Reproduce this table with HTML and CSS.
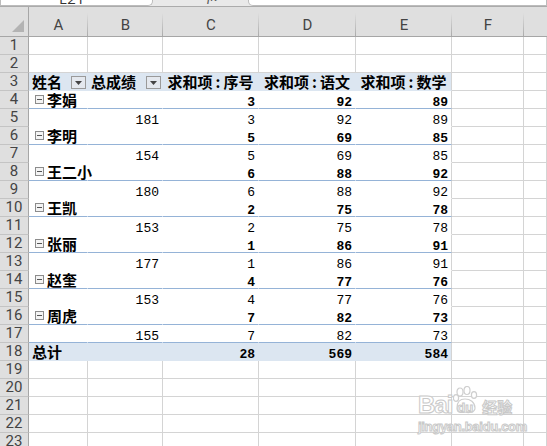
FILE: index.html
```
<!DOCTYPE html>
<html lang="zh-CN">
<head>
<meta charset="utf-8">
<title>数据透视表</title>
<link rel="stylesheet" href="styles.css">
</head>
<body>
<div class="topbar">
  <div class="namebox"><span>E21</span></div>
  <div class="fxgap"><span>fx</span></div>
  <div class="formula"></div>
</div>
<div class="sheet">
  <div class="row colhead">
    <div class="corner"><svg width="12" height="12" viewBox="0 0 12 12"><polygon points="12,0 12,12 0,12" fill="#b3b3b3"/></svg></div>
    <div class="ch">A</div><div class="ch">B</div><div class="ch">C</div><div class="ch">D</div><div class="ch">E</div><div class="ch">F</div><div class="ch last"></div>
  </div>

  <div class="row"><div class="rh">1</div><div></div><div></div><div></div><div></div><div></div><div></div><div></div></div>
  <div class="row"><div class="rh">2</div><div></div><div></div><div></div><div></div><div></div><div></div><div></div></div>

  <div class="row"><div class="rh">3</div>
    <div class="pv band hd fieldcell"><span>姓名</span><span class="dd"><svg width="7" height="4" viewBox="0 0 7 4"><polygon points="0,0 7,0 3.5,4" fill="#444"/></svg></span></div>
    <div class="pv band hd fieldcell"><span>总成绩</span><span class="dd"><svg width="7" height="4" viewBox="0 0 7 4"><polygon points="0,0 7,0 3.5,4" fill="#444"/></svg></span></div>
    <div class="pv band hd vh">求和项<span class="colon">:</span>序号</div>
    <div class="pv band hd vh">求和项<span class="colon">:</span>语文</div>
    <div class="pv band hd vh pe">求和项<span class="colon">:</span>数学</div>
    <div></div><div></div></div>

  <div class="row"><div class="rh">4</div><div class="pv sep name"><svg class="tg" width="9" height="9" viewBox="0 0 9 9"><rect x="0.5" y="0.5" width="8" height="8" fill="#f4f4f4" stroke="#8c8c8c"/><rect x="2" y="4" width="5" height="1" fill="#555"/></svg>李娟</div><div class="pv sep"></div><div class="pv sep num b">3</div><div class="pv sep num b">92</div><div class="pv sep pe num b">89</div><div></div><div></div></div>
  <div class="row"><div class="rh">5</div><div class="pv"></div><div class="pv num">181</div><div class="pv num">3</div><div class="pv num">92</div><div class="pv pe num">89</div><div></div><div></div></div>

  <div class="row"><div class="rh">6</div><div class="pv sep name"><svg class="tg" width="9" height="9" viewBox="0 0 9 9"><rect x="0.5" y="0.5" width="8" height="8" fill="#f4f4f4" stroke="#8c8c8c"/><rect x="2" y="4" width="5" height="1" fill="#555"/></svg>李明</div><div class="pv sep"></div><div class="pv sep num b">5</div><div class="pv sep num b">69</div><div class="pv sep pe num b">85</div><div></div><div></div></div>
  <div class="row"><div class="rh">7</div><div class="pv"></div><div class="pv num">154</div><div class="pv num">5</div><div class="pv num">69</div><div class="pv pe num">85</div><div></div><div></div></div>

  <div class="row"><div class="rh">8</div><div class="pv sep name"><svg class="tg" width="9" height="9" viewBox="0 0 9 9"><rect x="0.5" y="0.5" width="8" height="8" fill="#f4f4f4" stroke="#8c8c8c"/><rect x="2" y="4" width="5" height="1" fill="#555"/></svg>王二小</div><div class="pv sep"></div><div class="pv sep num b">6</div><div class="pv sep num b">88</div><div class="pv sep pe num b">92</div><div></div><div></div></div>
  <div class="row"><div class="rh">9</div><div class="pv"></div><div class="pv num">180</div><div class="pv num">6</div><div class="pv num">88</div><div class="pv pe num">92</div><div></div><div></div></div>

  <div class="row"><div class="rh">10</div><div class="pv sep name"><svg class="tg" width="9" height="9" viewBox="0 0 9 9"><rect x="0.5" y="0.5" width="8" height="8" fill="#f4f4f4" stroke="#8c8c8c"/><rect x="2" y="4" width="5" height="1" fill="#555"/></svg>王凯</div><div class="pv sep"></div><div class="pv sep num b">2</div><div class="pv sep num b">75</div><div class="pv sep pe num b">78</div><div></div><div></div></div>
  <div class="row"><div class="rh">11</div><div class="pv"></div><div class="pv num">153</div><div class="pv num">2</div><div class="pv num">75</div><div class="pv pe num">78</div><div></div><div></div></div>

  <div class="row"><div class="rh">12</div><div class="pv sep name"><svg class="tg" width="9" height="9" viewBox="0 0 9 9"><rect x="0.5" y="0.5" width="8" height="8" fill="#f4f4f4" stroke="#8c8c8c"/><rect x="2" y="4" width="5" height="1" fill="#555"/></svg>张丽</div><div class="pv sep"></div><div class="pv sep num b">1</div><div class="pv sep num b">86</div><div class="pv sep pe num b">91</div><div></div><div></div></div>
  <div class="row"><div class="rh">13</div><div class="pv"></div><div class="pv num">177</div><div class="pv num">1</div><div class="pv num">86</div><div class="pv pe num">91</div><div></div><div></div></div>

  <div class="row"><div class="rh">14</div><div class="pv sep name"><svg class="tg" width="9" height="9" viewBox="0 0 9 9"><rect x="0.5" y="0.5" width="8" height="8" fill="#f4f4f4" stroke="#8c8c8c"/><rect x="2" y="4" width="5" height="1" fill="#555"/></svg>赵奎</div><div class="pv sep"></div><div class="pv sep num b">4</div><div class="pv sep num b">77</div><div class="pv sep pe num b">76</div><div></div><div></div></div>
  <div class="row"><div class="rh">15</div><div class="pv"></div><div class="pv num">153</div><div class="pv num">4</div><div class="pv num">77</div><div class="pv pe num">76</div><div></div><div></div></div>

  <div class="row"><div class="rh">16</div><div class="pv sep name"><svg class="tg" width="9" height="9" viewBox="0 0 9 9"><rect x="0.5" y="0.5" width="8" height="8" fill="#f4f4f4" stroke="#8c8c8c"/><rect x="2" y="4" width="5" height="1" fill="#555"/></svg>周虎</div><div class="pv sep"></div><div class="pv sep num b">7</div><div class="pv sep num b">82</div><div class="pv sep pe num b">73</div><div></div><div></div></div>
  <div class="row"><div class="rh">17</div><div class="pv sep"></div><div class="pv sep num">155</div><div class="pv sep num">7</div><div class="pv sep num">82</div><div class="pv sep pe num">73</div><div></div><div></div></div>

  <div class="row"><div class="rh">18</div><div class="pv band hd">总计</div><div class="pv band"></div><div class="pv band num b">28</div><div class="pv band num b">569</div><div class="pv band pe num b">584</div><div></div><div></div></div>

  <div class="row"><div class="rh">19</div><div></div><div></div><div></div><div></div><div></div><div></div><div></div></div>
  <div class="row"><div class="rh">20</div><div></div><div></div><div></div><div></div><div></div><div></div><div></div></div>
  <div class="row"><div class="rh">21</div><div></div><div></div><div></div><div></div><div></div><div></div><div></div></div>
  <div class="row"><div class="rh">22</div><div></div><div></div><div></div><div></div><div></div><div></div><div></div></div>
  <div class="row"><div class="rh">23</div><div></div><div></div><div></div><div></div><div></div><div></div><div></div></div>
</div>

<div class="watermark">
  <div class="wm-top">
    <span class="wm-bai">Bai</span>
    <span class="wm-paw"><svg width="26" height="28" viewBox="0 0 26 28"><g fill="#fff" stroke="#cfcfcf" stroke-width="1.2"><ellipse cx="7" cy="6" rx="3" ry="4"/><ellipse cx="14" cy="4.5" rx="3" ry="4"/><ellipse cx="3" cy="12" rx="2.6" ry="3.3"/><ellipse cx="21" cy="9" rx="2.6" ry="3.3"/><path d="M4 22 C4 15 8 13 12 13 C17 13 22 16 22 22 C22 27 15 27 12 26 C8 27 4 27 4 22 Z"/></g></svg><span class="wm-du">du</span></span>
    <span class="wm-cn">经验</span>
  </div>
  <div class="wm-url">jingyan.baidu.com</div>
</div>
</body>
</html>
```

FILE: styles.css
```
* { box-sizing: border-box; }
html, body { margin: 0; padding: 0; }
body {
  width: 547px;
  height: 446px;
  overflow: hidden;
  background: #ffffff;
  font-family: "Noto Sans CJK SC", "Noto Sans", sans-serif;
  position: relative;
  color: #000;
}

/* top strip (name box / formula bar bottoms) */
.topbar {
  height: 7px;
  background: #e9e9e9;
  border-bottom: 1px solid #ababab;
  display: flex;
  overflow: hidden;
}
.namebox {
  width: 153px;
  height: 6px;
  background: #ffffff;
  border: 1px solid #bcbcbc;
  border-top: none;
  border-radius: 0 0 5px 0;
  overflow: hidden;
}
.namebox span {
  display: block;
  margin-top: -12px;
  padding-left: 58px;
  font: 15px/20px "Open Sans", sans-serif;
  color: #333;
}
.fxgap {
  width: 95px;
  height: 6px;
  overflow: hidden;
}
.fxgap span {
  display: block;
  margin-top: -13px;
  padding-left: 54px;
  font: italic 14px/20px "Liberation Serif", serif;
  color: #555;
}
.formula {
  flex: 1;
  height: 6px;
  background: #ffffff;
  border: 1px solid #bcbcbc;
  border-top: none;
  border-radius: 0 0 0 5px;
}

/* grid */
.row {
  display: grid;
  grid-template-columns: 29px 59px 75px 96px 97px 96px 72px 1fr;
  grid-template-rows: 18px;
  height: 18px;
}
.row > div {
  border-right: 1px solid #d4d4d4;
  border-bottom: 1px solid #d4d4d4;
  white-space: nowrap;
  line-height: 17px;
  font-size: 15px;
}

/* column header */
.row.colhead { height: 30px; grid-template-rows: 30px; }
.row.colhead > div {
  background: #dfdfdf linear-gradient(to bottom, rgba(171,171,171,0) 20%, #ababab 100%) no-repeat right top / 1px 100%;
  border-right: none;
  border-bottom: 1px solid #a6a6a6;
  text-align: center;
  font: 15px/20px "Roboto", sans-serif;
  color: #444;
  padding-top: 8px;
}
.row.colhead > div.corner {
  background: #dfdfdf;
  border-right: 1px solid #a6a6a6;
  padding: 13px 0 0 12px;
  text-align: left;
}
.corner svg { display: block; }
.row.colhead > div.last { background: #dfdfdf; }

/* row header */
.row > div.rh {
  background: #dfdfdf;
  border-right: 1px solid #a6a6a6;
  border-bottom: 1px solid #c4c4c4;
  text-align: center;
  font: 15px/17px "Roboto", sans-serif;
  color: #444;
}

/* pivot area */
.row > div.pv {
  border-right-color: transparent;
  border-bottom-color: transparent;
}
.row > div.pv.pe { border-right-color: #d4d4d4; }
.row > div.pv.sep { border-bottom-color: #95b3d7; }
.row > div.pv.band { background: #dce6f1; }
.hd {
  font-weight: bold;
  padding-left: 3px;
}
.fieldcell {
  display: flex;
  justify-content: space-between;
  align-items: flex-start;
  padding-right: 1px;
}
.dd {
  width: 15px;
  height: 13px;
  margin-top: 3px;
  background: #e4e8ee;
  border: 1px solid #9a9a9a;
  display: flex;
  align-items: center;
  justify-content: center;
}
.dd svg { display: block; }
.vh { text-align: center; padding-left: 0; }
.colon { margin: 0 3px; }

.name {
  font-weight: bold;
  padding-left: 6px;
  display: flex;
  align-items: center;
}
.tg { margin-right: 3px; flex: none; }

.num {
  text-align: right;
  padding-right: 3px;
  font-family: "Liberation Mono", monospace;
}
.row > div.num { font-size: 13px; line-height: 11px; padding-top: 6px; }
.b { font-weight: bold; }

/* watermark overlay */
.watermark {
  position: absolute;
  left: 418px;
  top: 381px;
  width: 104px;
  color: #ffffff;
  -webkit-text-stroke: 1px #c9c9c9;
}
.wm-top {
  display: flex;
  align-items: flex-end;
  height: 35px;
}
.wm-bai {
  font: bold 24px/22px "Liberation Sans", sans-serif;
  letter-spacing: -1px;
}
.wm-paw {
  position: relative;
  width: 28px;
  height: 30px;
  display: block;
  margin-left: 1px;
}
.wm-paw svg { display: block; }
.wm-du {
  position: absolute;
  left: 4px;
  bottom: 2px;
  font: bold 13px/13px "Liberation Sans", sans-serif;
}
.wm-cn {
  font: bold 15px/16px "Noto Sans CJK SC", sans-serif;
  margin-left: 1px;
  margin-bottom: 1px;
}
.wm-url {
  font: bold 13px/14px "Liberation Sans", sans-serif;
  margin-top: 4px;
  letter-spacing: -0.3px;
}
```
